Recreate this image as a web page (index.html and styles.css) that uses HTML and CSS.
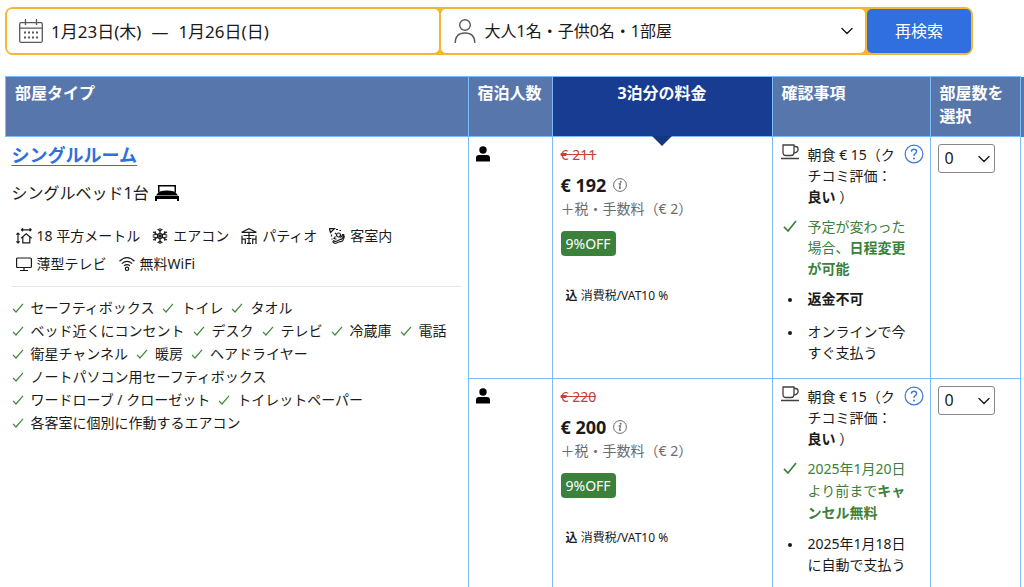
FILE: index.html
```html
<!DOCTYPE html>
<html lang="ja">
<head>
<meta charset="utf-8">
<meta name="viewport" content="width=device-width, initial-scale=1">
<title>シングルルーム</title>
<link rel="stylesheet" href="styles.css">
</head>
<body>
<svg class="sprite" aria-hidden="true">
  <symbol id="tick" viewBox="0 0 12 12"><path d="M1 6.8 4 10 11 1.8" fill="none" stroke="currentColor" stroke-width="1.2"/></symbol>
  <symbol id="tick-bold" viewBox="0 0 14 14"><path d="M1 7.8 5 12 13 2" fill="none" stroke="currentColor" stroke-width="1.7"/></symbol>
  <symbol id="chevron" viewBox="0 0 12 8"><path d="M1 1.5 6 6.5 11 1.5" fill="none" stroke="currentColor" stroke-width="1.4" stroke-linecap="round" stroke-linejoin="round"/></symbol>
  <symbol id="guest" viewBox="0 0 14 16"><circle cx="7" cy="4" r="3.7"/><path d="M0 15.5V12q0-3 3-3h8q3 0 3 3v3.500z"/></symbol>
  <symbol id="cup" viewBox="0 0 18 16"><path d="M2 1h11v7.500q0 3-3 3H5q-3 0-3-3zM13 2.500h1.500q2.600 0 2.600 2.700 0 3.200-4.300 3.800M0 14.500h18" fill="none" stroke="currentColor" stroke-width="1.300"/></symbol>
  <symbol id="info" viewBox="0 0 14 14"><circle cx="7" cy="7" r="6.400" fill="none" stroke="currentColor"/><path d="M5.600 5.800h1.800L6.500 10.200h1.500" fill="none" stroke="currentColor" stroke-width="1.200"/><circle cx="7.700" cy="3.700" r="1" fill="currentColor"/></symbol>
  <symbol id="help" viewBox="0 0 20 20"><circle cx="10" cy="10" r="8.900" fill="none" stroke="currentColor" stroke-width="1.200"/><path d="M7.400 7.800q0-2.600 2.600-2.600t2.600 2.300q0 1.200-1.400 2.100T10 12" fill="none" stroke="currentColor" stroke-width="1.400"/><circle cx="10" cy="14.500" r="1" fill="currentColor"/></symbol>
</svg>

<form class="search">
  <button type="button" class="search-field dates">
    <svg class="icon-search" viewBox="0 0 24 24"><g fill="none" stroke="currentColor" stroke-width="1.300"><rect x=".7" y="3.700" width="22.600" height="19.600" rx="1.500"/><path d="M.7 9.200h22.600M6.500 0v6M17.500 0v6"/></g><path d="M5 12.500h2v2H5zm4 0h2v2H9zm4 0h2v2h-2zm4 0h2v2h-2zM5 17.500h2v2H5zm4 0h2v2H9zm4 0h2v2h-2zm4 0h2v2h-2z"/></svg>
    <span>1月23日(木)</span><span>—</span><span>1月26日(日)</span>
  </button>
  <button type="button" class="search-field party">
    <svg class="icon-search" viewBox="0 0 24 24"><g fill="none" stroke="currentColor" stroke-width="1.400"><circle cx="12" cy="6" r="5.300"/><path d="M2.200 24q0-10 9.800-10t9.800 10"/></g></svg>
    <span class="party-text">大人1名・子供0名・1部屋</span>
    <svg class="chevron"><use href="#chevron"/></svg>
  </button>
  <button type="submit" class="search-submit">再検索</button>
</form>

<table class="rooms">
  <colgroup><col><col class="col-guests"><col class="col-price"><col class="col-terms"><col class="col-count"><col class="col-edge"></colgroup>
  <thead>
    <tr>
      <th scope="col">部屋タイプ</th>
      <th scope="col">宿泊人数</th>
      <th scope="col" class="active">3泊分の料金</th>
      <th scope="col">確認事項</th>
      <th scope="col" class="count-head">部屋数を選択</th>
      <td class="edge-head"></td>
    </tr>
  </thead>
  <tbody>
    <tr>
      <td rowspan="2" class="room">
        <a href="#" class="room-name">シングルルーム</a>
        <p class="bed">シングルベッド1台
          <svg class="icon-bed" viewBox="0 0 24 16"><path d="M3 0h18v7.500h-1.500v-6h-15v6H3z"/><path d="M2.500 8.500Q4 5.500 12 5.500t9.500 3l1.500 2H1zM0 11h24v5h-2v-2H2v2H0z"/></svg>
        </p>
        <ul class="facilities">
          <li><svg class="icon" viewBox="0 0 16 16"><g fill="none" stroke="currentColor" stroke-width="1.200"><path d="M5.500 1.800H15M7 .3 5.400 1.800 7 3.300M13.600.3l1.600 1.500-1.600 1.500M2 5v10M.4 6.600 2 5l1.600 1.600M.4 13.400 2 15l1.600-1.600"/><path d="m5 10.300 5.300-4.600 5.300 4.600M6.800 9v5.800h7V9"/></g></svg>18 平方メートル</li>
          <li><svg class="icon" viewBox="0 0 16 16"><path fill="none" stroke="currentColor" stroke-width="1.100" d="M8 0v16M1 4l14 8M15 4 1 12M5.700 1 8 3.300 10.300 1M5.700 15 8 12.700l2.300 2.300M.7 7.300l3.200-.9-.9-3.200M15.300 8.700l-3.200.9.9 3.200M.7 8.700l3.200.9-.9 3.200M15.300 7.300l-3.200-.9.9-3.200M8 5l2.600 1.500v3L8 11 5.400 9.500v-3z"/></svg>エアコン</li>
          <li><svg class="icon" viewBox="0 0 16 16"><path fill="none" stroke="currentColor" stroke-width="1.200" d="M.7 4.300 8 .7l7.300 3.600zM8 4.300V15M2.500 7.500h11M1 7.500v3.700h3.300V16M1 11v5M15 7.500v3.700h-3.300V16M15 11v5M5.500 10.500h5M6 15.400h4"/></svg>パティオ</li>
          <li><svg class="icon" viewBox="0 0 16 16"><g fill="none" stroke="currentColor" stroke-width="1.200"><path d="M.5.700h5L1.500 4.500z"/><path d="M7 1.500h2M10.500 2.500h1.500M2.500 6.500v2M3 10.500v1M6 5l1 1"/><circle cx="9.500" cy="7" r="2"/><path d="M4 12.500q2 1.800 4.500.3l2.800-1.500q2.500.5 3.400-4.800h-1.200q-.6 2.700-2.300 3M3.500 13.500q1.500 2.500 4 1.500l3.500-1.500q4 .5 4.300-6M6.500 8.500l-1.500 2 2.500.8"/></g></svg>客室内</li>
          <li><svg class="icon" viewBox="0 0 16 16"><path fill="none" stroke="currentColor" stroke-width="1.200" d="M1.600 2h12.800q1 0 1 1v7.500q0 1-1 1H1.600q-1 0-1-1V3q0-1 1-1zM8 11.500v3M4 14.500h8"/></svg>薄型テレビ</li>
          <li><svg class="icon" viewBox="0 0 16 16"><g fill="none" stroke="currentColor" stroke-width="1.200"><path d="M.5 5.300Q8-1.900 15.500 5.300M2.800 7.600q5.200-4.600 10.400 0M5 9.800q3-2.400 6 0"/><circle cx="8" cy="12.800" r="1.700"/></g></svg>無料WiFi</li>
        </ul>
        <ul class="amenities">
          <li><svg class="tick"><use href="#tick"/></svg>セーフティボックス</li>
          <li><svg class="tick"><use href="#tick"/></svg>トイレ</li>
          <li><svg class="tick"><use href="#tick"/></svg>タオル</li>
          <li><svg class="tick"><use href="#tick"/></svg>ベッド近くにコンセント</li>
          <li><svg class="tick"><use href="#tick"/></svg>デスク</li>
          <li><svg class="tick"><use href="#tick"/></svg>テレビ</li>
          <li><svg class="tick"><use href="#tick"/></svg>冷蔵庫</li>
          <li><svg class="tick"><use href="#tick"/></svg>電話</li>
          <li><svg class="tick"><use href="#tick"/></svg>衛星チャンネル</li>
          <li><svg class="tick"><use href="#tick"/></svg>暖房</li>
          <li><svg class="tick"><use href="#tick"/></svg>ヘアドライヤー</li>
          <li><svg class="tick"><use href="#tick"/></svg>ノートパソコン用セーフティボックス</li>
          <li><svg class="tick"><use href="#tick"/></svg>ワードローブ / クローゼット</li>
          <li><svg class="tick"><use href="#tick"/></svg>トイレットペーパー</li>
          <li><svg class="tick"><use href="#tick"/></svg>各客室に個別に作動するエアコン</li>
        </ul>
      </td>
      <td class="guests"><svg class="guest" role="img" aria-label="1名"><use href="#guest"/></svg></td>
      <td class="price">
        <s class="price-old">€ 211</s>
        <p class="price-now">€ 192 <svg class="info"><use href="#info"/></svg></p>
        <p class="price-tax">＋税・手数料（€ 2）</p>
        <span class="badge">9%OFF</span>
        <p class="vat"><b>込</b> 消費税/VAT10 %</p>
      </td>
      <td class="terms">
        <ul class="term-list">
          <li><svg class="cup"><use href="#cup"/></svg><span class="term-text">朝食 € 15（クチコミ評価：<b>良い</b> ）</span><svg class="help"><use href="#help"/></svg></li>
          <li class="good"><svg class="tick-bold"><use href="#tick-bold"/></svg><span class="term-text">予定が変わった場合、<b>日程変更が可能</b></span></li>
          <li><span class="dot"></span><span class="term-text"><b>返金不可</b></span></li>
          <li><span class="dot"></span><span class="term-text">オンラインで今すぐ支払う</span></li>
        </ul>
      </td>
      <td class="count"><div class="select-box"><select aria-label="部屋数を選択"><option>0</option><option>1</option></select><svg class="chevron"><use href="#chevron"/></svg></div></td>
      <td class="edge"></td>
    </tr>
    <tr class="last">
      <td class="guests"><svg class="guest" role="img" aria-label="1名"><use href="#guest"/></svg></td>
      <td class="price">
        <s class="price-old">€ 220</s>
        <p class="price-now">€ 200 <svg class="info"><use href="#info"/></svg></p>
        <p class="price-tax">＋税・手数料（€ 2）</p>
        <span class="badge">9%OFF</span>
        <p class="vat"><b>込</b> 消費税/VAT10 %</p>
      </td>
      <td class="terms">
        <ul class="term-list">
          <li><svg class="cup"><use href="#cup"/></svg><span class="term-text">朝食 € 15（クチコミ評価：<b>良い</b> ）</span><svg class="help"><use href="#help"/></svg></li>
          <li class="good roomy"><svg class="tick-bold"><use href="#tick-bold"/></svg><span class="term-text">2025年1月20日より前まで<b>キャンセル無料</b></span></li>
          <li><span class="dot"></span><span class="term-text">2025年1月18日に自動で支払う</span></li>
        </ul>
      </td>
      <td class="count"><div class="select-box"><select aria-label="部屋数を選択"><option>0</option><option>1</option></select><svg class="chevron"><use href="#chevron"/></svg></div></td>
      <td class="edge"></td>
    </tr>
  </tbody>
</table>
</body>
</html>
```

FILE: styles.css
```css
* { box-sizing: border-box; }
html { scrollbar-width: none; }
body {
  margin: 0;
  padding: 7px 0 0 5px;
  background: #fff;
  color: #1a1a1a;
  font: 14px/21px "Noto Sans", "Noto Sans CJK JP", sans-serif;
}
ul, p { margin: 0; padding: 0; list-style: none; }
svg { flex: none; }
.sprite { display: none; }
button, select { font: inherit; color: inherit; }

.search {
  display: flex;
  gap: 2px;
  width: 95%;
  height: 48px;
  padding: 2px;
  border-radius: 8px;
  background: #f5b731;
}
.search-field {
  display: flex;
  align-items: center;
  gap: 8px;
  padding: 0 12px;
  border: 0;
  border-radius: 5px;
  background: #fff;
  font-size: 16px;
  text-align: left;
}
.dates { flex: 408; font-size: 17px; }
.dates span + span { margin-left: 2px; }
.party { flex: 401; }
.party-text { flex: 1; }
.icon-search { width: 24px; height: 24px; color: #595959; fill: #595959; }
.chevron { width: 12px; height: 8px; color: #1a1a1a; }
.search-submit {
  flex: 92;
  border: 0;
  border-radius: 5px;
  background: #2f6fe0;
  color: #fff;
  font-size: 16px;
}

.rooms {
  width: 100%;
  margin-top: 21px;
  border-collapse: collapse;
  table-layout: fixed;
}
.col-guests { width: 84px; }
.col-price { width: 220px; }
.col-terms { width: 158px; }
.col-count { width: 90px; }
.col-edge { width: 4px; }
.rooms th {
  position: relative;
  height: 60px;
  padding: 5px 0 5px 9px;
  border: 1px solid #7ebbf9;
  background: #5776ac;
  color: #fff;
  font-size: 16px;
  line-height: 23px;
  text-align: left;
  vertical-align: top;
}
.rooms .active { background: #173c92; padding: 5px 0; text-align: center; }
.rooms .count-head { padding-right: 9px; }
.active::after {
  content: "";
  position: absolute;
  top: 100%;
  left: 50%;
  margin-left: -10px;
  border: 10px solid transparent;
  border-top-color: #14377f;
  border-bottom: 0;
}
.edge-head { background: #5776ac; }
.rooms tbody td { height: 242px; padding: 0; vertical-align: top; }
.rooms tbody td:not(.room, .edge) { border: 1px solid #7ebbf9; }
.rooms tbody .last td { height: 208px; border-bottom: 0; }

.rooms .room { padding: 6px 6px 0 6px; }
.room-name {
  display: block;
  width: fit-content;
  color: #2f6fe0;
  font-size: 18px;
  font-weight: 700;
  line-height: 24px;
  text-underline-offset: 3px;
}
.bed { display: flex; align-items: center; gap: 6px; margin-top: 14px; font-size: 16px; line-height: 24px; }
.icon-bed { width: 24px; height: 16px; }
.facilities {
  display: flex;
  flex-wrap: wrap;
  gap: 0 12px;
  margin-top: 17px;
  padding: 0 4px 8px;
  border-bottom: 1px solid #e7e7e7;
}
.facilities li { display: flex; align-items: center; gap: 5px; line-height: 28px; }
.icon { width: 16px; height: 16px; }
.amenities { display: flex; flex-wrap: wrap; gap: 0 8px; margin-top: 9px; }
.amenities li { display: flex; align-items: center; gap: 7px; line-height: 23px; }
.tick { width: 12px; height: 12px; color: #3c8a3a; }

.rooms tbody .guests { padding: 9px 7px; }
.guest { display: block; width: 14px; height: 16px; fill: #000; }

.rooms tbody .price { padding: 7px 8px 0; }
.price-old { display: block; color: #c8403a; }
.price-now { display: flex; align-items: center; gap: 7px; margin-top: 7px; font-size: 18px; font-weight: 700; line-height: 26px; }
.info { width: 14px; height: 14px; color: #6b6b6b; }
.price-tax { color: #6b6b6b; }
.badge {
  display: block;
  width: fit-content;
  margin-top: 12px;
  padding: 2px 5px;
  border-radius: 4px;
  background: #3b803b;
  color: #fff;
}
.vat { margin-top: 29px; padding-left: 5px; font-size: 12px; }

.rooms tbody .terms { padding: 7px 6px 0 8px; }
.term-list { display: flex; flex-direction: column; gap: 9px; }
.term-list li { display: flex; align-items: flex-start; }
.term-text { flex: 1; max-width: 102px; margin-left: 9px; line-break: anywhere; }
.good { color: #3b803b; }
.roomy { line-height: 22px; }
.cup { width: 18px; height: 16px; color: #404040; }
.help { width: 20px; height: 20px; color: #3f7bd6; }
.tick-bold { width: 14px; height: 14px; margin: 3px 2px; }
.dot { width: 4px; height: 4px; margin: 10px 7px; border-radius: 50%; background: #1a1a1a; }

.rooms tbody .count { padding: 7px; }
.select-box { display: grid; width: 57px; align-items: center; }
.select-box > * { grid-area: 1 / 1; }
.select-box select {
  height: 29px;
  padding: 0 6px;
  border: 1px solid #868686;
  border-radius: 3px;
  appearance: none;
  background: #fff;
  font-size: 16px;
}
.select-box .chevron { z-index: 1; justify-self: end; margin-right: 5px; pointer-events: none; }
```
